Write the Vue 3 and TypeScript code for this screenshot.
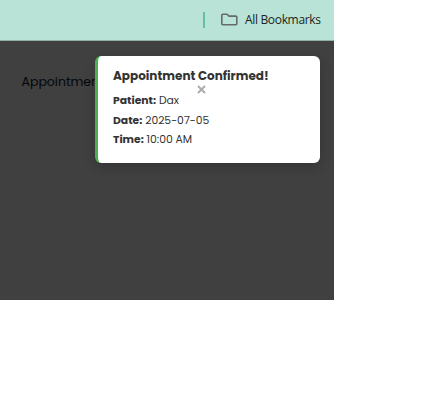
<script setup lang="ts">
interface Detail {
  key: string
  label: string
  value: string
}

const details: Detail[] = [
  { key: 'patient', label: 'Patient:', value: 'Dax' },
  { key: 'date', label: 'Date:', value: '2025-07-05' },
  { key: 'time', label: 'Time:', value: '10:00 AM' },
]
</script>

<template>
  <div class="screen">
    <header class="bookmarks">
      <span class="divider"></span>
      <svg class="folder" width="17" height="13" viewBox="0 0 17 13" fill="none">
        <path
          d="M1.8 1.2H6L8 3.1H14.8Q15.8 3.1 15.8 4V10.8Q15.8 11.7 14.8 11.7H1.8Q0.8 11.7 0.8 10.8V2.1Q0.8 1.2 1.8 1.2Z"
          stroke="#666b69"
          stroke-width="1.6"
        />
      </svg>
      <span class="all">All Bookmarks</span>
    </header>
    <main class="page">
      <span class="nav">Appointment</span>
      <section class="toast">
        <h1 class="title">Appointment Confirmed!</h1>
        <button class="close" type="button" aria-label="Close">
          <svg width="9" height="9" viewBox="0 0 9 9">
            <path d="M1 1L8 8M8 1L1 8" stroke="#aaa" stroke-width="1.9" />
          </svg>
        </button>
        <p v-for="d in details" :key="d.key" class="row" :class="d.key">
          <strong>{{ d.label }}</strong> <span>{{ d.value }}</span>
        </p>
      </section>
    </main>
  </div>
</template>

<style>
body {
  background: #fff;
}
</style>

<style scoped>
.screen {
  width: 334px;
  height: 300px;
  overflow: hidden;
  background: #404040;
  font-family: Poppins, Inter, sans-serif;
}
.bookmarks {
  box-sizing: border-box;
  height: 41px;
  display: flex;
  align-items: center;
  justify-content: flex-end;
  padding: 0 13px 1px 0;
  background: #b9e3d6;
  border-bottom: 1px solid #8fb0a6;
}
.divider {
  width: 2px;
  height: 16px;
  margin-right: 16px;
  background: #64bfa5;
}
.folder {
  margin-right: 7px;
}
.all {
  width: 76px;
  font: 12px/16px 'Segoe UI', 'Open Sans', sans-serif;
  letter-spacing: -0.33px;
  white-space: nowrap;
  color: #1c2422;
}
.page {
  position: relative;
  box-sizing: border-box;
  height: 259px;
  padding: 32px 0 0 21.5px;
  border-bottom: 1px solid #443d43;
}
.nav {
  display: block;
  font-size: 12.5px;
  line-height: 18px;
  color: #04060a;
}
.toast {
  position: absolute;
  top: 15px;
  right: 14px;
  box-sizing: border-box;
  width: 225px;
  height: 107px;
  padding: 10px 15px;
  border-left: 3px solid #4caf50;
  border-radius: 6px;
  background: #fff;
  box-shadow: 0 4px 12px rgba(0, 0, 0, 0.2);
  color: #333;
}
.title {
  margin: 0;
  font-size: 12px;
  font-weight: 700;
  line-height: 20px;
  white-space: nowrap;
}
.close {
  position: absolute;
  top: 29px;
  left: 99px;
  display: flex;
  padding: 0;
  border: 0;
  background: none;
}
.row {
  height: 19.5px;
  margin: 0;
  font-size: 10.8px;
  line-height: 19.5px;
  white-space: nowrap;
}
.row.patient {
  margin-top: 5px;
}
</style>
